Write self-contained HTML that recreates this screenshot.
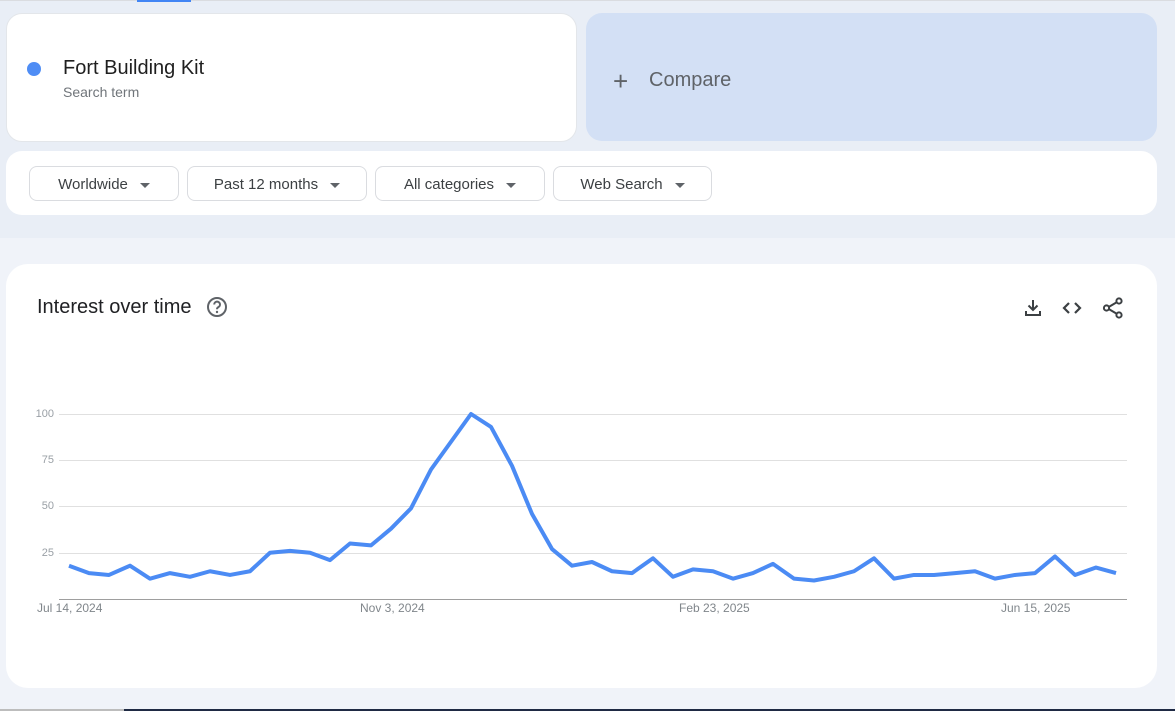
<!DOCTYPE html>
<html><head><style>
*{margin:0;padding:0;box-sizing:border-box}
body{width:1175px;height:711px;overflow:hidden;background:#f0f3f9;font-family:"Liberation Sans",sans-serif;position:relative}
.top{position:absolute;left:0;top:0;width:1175px;height:238px;background:#e9eef6}
.card{position:absolute;background:#fff}
.chip{position:absolute;top:166px;height:35px;border:1px solid #dadce0;border-radius:8px;background:#fff;font-size:15px;color:#3c4043;line-height:35px;padding-left:0;text-align:center}
.chip span.a{display:inline-block;width:0;height:0;border-left:5px solid transparent;border-right:5px solid transparent;border-top:5px solid #5f6368;margin-left:12px;vertical-align:middle}
.yl{position:absolute;left:30px;width:24px;text-align:right;font-size:11px;color:#9aa0a6}
.xl{position:absolute;top:601px;font-size:12px;color:#80868b}
</style></head><body>
<div class="top"></div>
<div style="position:absolute;left:0;top:0;width:1175px;height:1px;background:#dadce0"></div>
<div style="position:absolute;left:137px;top:0;width:54px;height:2px;background:#4285f4"></div>
<div class="card" style="left:6px;top:13px;width:571px;height:129px;border-radius:16px;border:1px solid #e3e6ea"></div>
<div style="position:absolute;left:27px;top:62px;width:14px;height:14px;border-radius:50%;background:#4f8df5"></div>
<div style="position:absolute;left:63px;top:57px;font-size:20px;color:#1f1f1f">Fort Building Kit</div>
<div style="position:absolute;left:63px;top:84px;font-size:14px;color:#70757a">Search term</div>
<div style="position:absolute;left:586px;top:13px;width:571px;height:128px;border-radius:16px;background:#d3e0f5"></div>
<div style="position:absolute;left:613px;top:66px;font-size:26px;color:#5f6368;line-height:30px;font-weight:300">+</div>
<div style="position:absolute;left:649px;top:69px;font-size:20px;color:#5f6368">Compare</div>
<div class="card" style="left:6px;top:151px;width:1151px;height:64px;border-radius:16px"></div>
<div class="chip" style="left:29px;width:150px">Worldwide<span class="a"></span></div>
<div class="chip" style="left:187px;width:180px">Past 12 months<span class="a"></span></div>
<div class="chip" style="left:375px;width:170px">All categories<span class="a"></span></div>
<div class="chip" style="left:553px;width:159px">Web Search<span class="a"></span></div>
<div class="card" style="left:6px;top:264px;width:1151px;height:424px;border-radius:22px"></div>
<div style="position:absolute;left:37px;top:296px;font-size:20px;color:#202124">Interest over time</div>
<svg style="position:absolute;left:205px;top:295px" width="24" height="24" viewBox="0 0 24 24"><circle cx="12" cy="12" r="9" fill="none" stroke="#5f6368" stroke-width="2"/><path d="M9.2 9.5a2.9 2.9 0 1 1 4.2 2.6c-1 .5-1.4 1-1.4 2.2" fill="none" stroke="#5f6368" stroke-width="2"/><circle cx="12" cy="17" r="1.2" fill="#5f6368"/></svg>
<svg style="position:absolute;left:1022px;top:297px" width="22" height="22" viewBox="0 0 22 22"><path d="M11 3v10M6.5 8.5l4.5 4.5 4.5-4.5M4 14v4h14v-4" fill="none" stroke="#3c4043" stroke-width="2"/></svg>
<svg style="position:absolute;left:1061px;top:297px" width="22" height="22" viewBox="0 0 22 22"><path d="M8 6l-5 5 5 5M14 6l5 5-5 5" fill="none" stroke="#3c4043" stroke-width="2.2"/></svg>
<svg style="position:absolute;left:1101px;top:296px" width="24" height="24" viewBox="0 0 24 24"><path d="M6 12L17 5.5M6 12l11 6.5" stroke="#3c4043" stroke-width="2"/><circle cx="5.5" cy="12" r="2.6" fill="#fff" stroke="#3c4043" stroke-width="2"/><circle cx="18" cy="5" r="2.6" fill="#fff" stroke="#3c4043" stroke-width="2"/><circle cx="18" cy="19" r="2.6" fill="#fff" stroke="#3c4043" stroke-width="2"/></svg>
<div class="yl" style="top:408px">100</div>
<div class="yl" style="top:454px">75</div>
<div class="yl" style="top:500px">50</div>
<div class="yl" style="top:547px">25</div>
<svg style="position:absolute;left:0;top:0" width="1175" height="711">
<g stroke="#e0e0e0" stroke-width="1"><line x1="59" y1="414.5" x2="1127" y2="414.5"/><line x1="59" y1="460.5" x2="1127" y2="460.5"/><line x1="59" y1="506.5" x2="1127" y2="506.5"/><line x1="59" y1="553.5" x2="1127" y2="553.5"/></g>
<line x1="59" y1="599.5" x2="1127" y2="599.5" stroke="#9e9e9e"/>
<g transform="translate(0,599) scale(1,-1.85)">
<polyline vector-effect="non-scaling-stroke" fill="none" stroke="#4b8bf4" stroke-width="4" stroke-linejoin="round" points="69,18 89,14 109,13 130,18 150,11 170,14 190,12 210,15 230,13 250,15 270,25 290,26 310,25 330,21 350,30 371,29 391,38 411,49 431,70 451,85 471,100 491,93 512,72 532,46 552,27 572,18 592,20 612,15 632,14 653,22 673,12 693,16 713,15 733,11 753,14 773,19 794,11 814,10 834,12 854,15 874,22 894,11 914,13 934,13 955,14 975,15 995,11 1015,13 1035,14 1055,23 1075,13 1096,17 1116,14"/>
</g></svg>
<div class="xl" style="left:37px">Jul 14, 2024</div>
<div class="xl" style="left:360px">Nov 3, 2024</div>
<div class="xl" style="left:679px">Feb 23, 2025</div>
<div class="xl" style="left:1001px">Jun 15, 2025</div>
<div style="position:absolute;left:0;top:709px;width:124px;height:2px;background:#bdbdbd"></div>
<div style="position:absolute;left:124px;top:709px;width:1051px;height:2px;background:#1f2a44"></div>
</body></html>
